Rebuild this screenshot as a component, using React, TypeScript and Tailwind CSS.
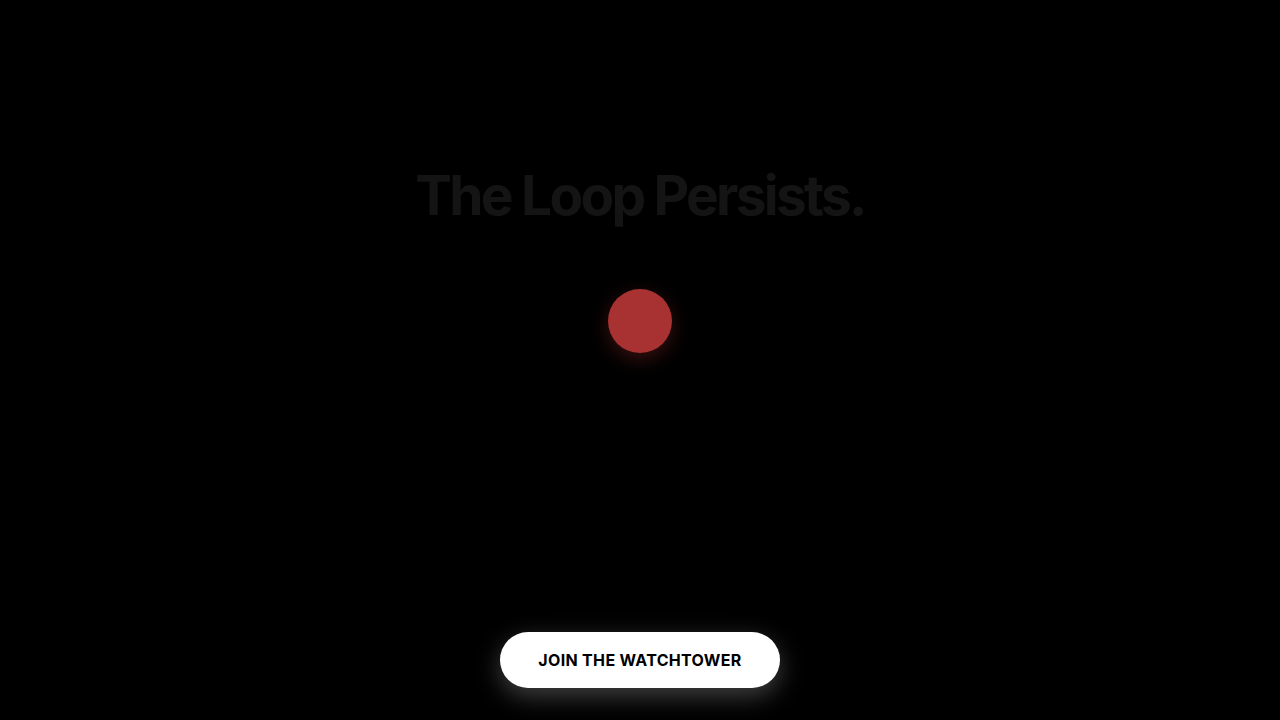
export default function App() {
  return (
    <div className="flex h-screen w-full flex-col items-center bg-black" style={{ fontFamily: "Inter, 'Noto Sans', sans-serif" }}>
      <div className="flex flex-1 flex-col items-center pt-[168px]">
        <h1 className="text-[55px] font-bold leading-none tracking-[-0.05em] text-[#141414]">The Loop Persists.</h1>
        <div className="mt-[66px] h-16 w-16 rounded-full bg-[#a83232] shadow-[0_6px_20px_rgba(168,50,50,0.35)]" />
      </div>
      <div className="pb-8">
        <button className="flex h-14 w-[280px] items-center justify-center rounded-full bg-white text-base font-bold tracking-[0.02em] text-black shadow-[0_8px_24px_rgba(255,255,255,0.25)]">
          JOIN THE WATCHTOWER
        </button>
      </div>
    </div>
  );
}
